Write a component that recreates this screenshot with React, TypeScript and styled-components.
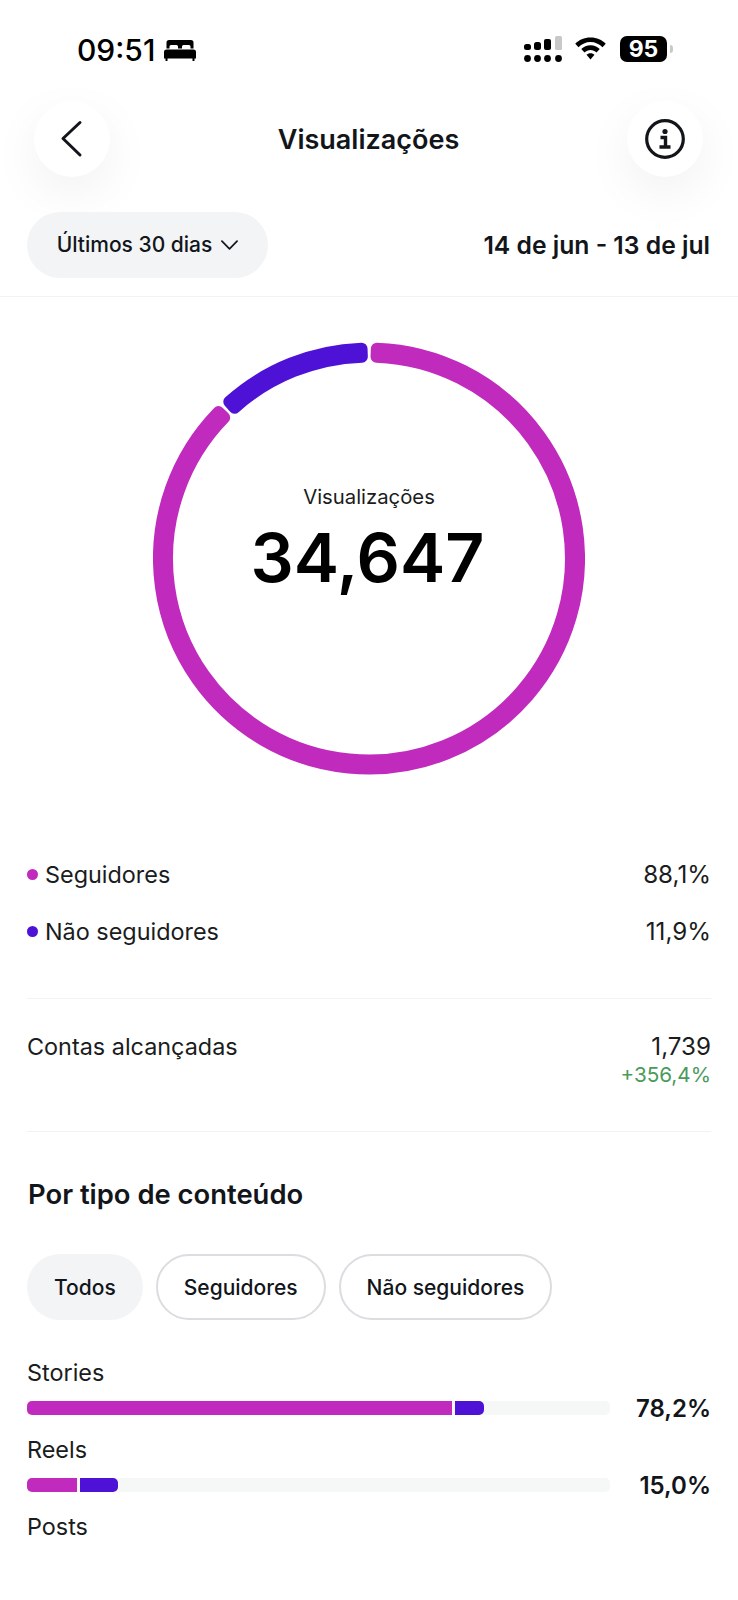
import React from "react";
import styled, { createGlobalStyle } from "styled-components";

const MAGENTA = "#c02abd";
const VIOLET = "#4e12d6";

const Global = createGlobalStyle`
  html, body { margin: 0; padding: 0; background: #fff; }
  * { box-sizing: border-box; }
  body { font-family: Inter, "Noto Sans", sans-serif; color: #12151a; }
`;

const Page = styled.div`
  width: 738px;
  height: 1600px;
  overflow: hidden;
  background: #fff;
  display: flex;
  flex-direction: column;
`;

const StatusBar = styled.div`
  height: 101px;
  padding: 29px 71px 0 77px;
  display: flex;
  justify-content: space-between;
  align-items: flex-start;
`;

const TimeGroup = styled.div`
  display: flex;
  align-items: center;
  gap: 9px;
  height: 40px;
  margin-top: 1px;
`;

const Time = styled.span`
  font-size: 30px;
  font-weight: 500;
  color: #000;
  line-height: 40px;
`;

const StatusIcons = styled.div`
  display: flex;
  align-items: center;
  gap: 12px;
  height: 40px;
`;

const Battery = styled.div`
  width: 47px;
  height: 26px;
  margin-left: 1px;
  background: #000;
  border-radius: 7px;
  color: #fff;
  font-size: 23px;
  font-weight: 700;
  display: flex;
  align-items: center;
  justify-content: center;
  position: relative;
  &::after {
    content: "";
    position: absolute;
    right: -6px;
    top: 9px;
    width: 3px;
    height: 8px;
    border-radius: 0 3px 3px 0;
    background: #c9c9c9;
  }
`;

const NavBar = styled.div`
  height: 76px;
  padding: 0 35px 0 34px;
  display: flex;
  align-items: center;
  justify-content: space-between;
`;

const RoundButton = styled.div`
  width: 76px;
  height: 76px;
  border-radius: 50%;
  background: #fff;
  display: flex;
  align-items: center;
  justify-content: center;
  box-shadow: 0 16px 50px rgba(0, 0, 0, 0.06);
`;

const Title = styled.div`
  font-size: 27px;
  font-weight: 600;
`;

const FilterBar = styled.div`
  margin-top: 35px;
  height: 85px;
  padding: 0 28px 19px 27px;
  display: flex;
  align-items: center;
  justify-content: space-between;
  border-bottom: 1px solid #f2f3f4;
`;

const RangePill = styled.div`
  width: 241px;
  height: 66px;
  border-radius: 33px;
  background: #f3f4f6;
  display: flex;
  align-items: center;
  justify-content: center;
  gap: 9px;
  font-size: 21px;
  font-weight: 500;
`;

const DateRange = styled.div`
  font-size: 24.7px;
  font-weight: 600;
`;

const RingWrap = styled.div`
  margin-top: 45px;
  height: 434px;
  position: relative;
  display: flex;
  justify-content: center;
`;

const RingCenter = styled.div`
  position: absolute;
  left: 0;
  right: 0;
  top: 139px;
  display: flex;
  flex-direction: column;
  align-items: center;
`;

const RingLabel = styled.div`
  font-size: 20.3px;
  line-height: 32px;
  color: #1a1c20;
`;

const RingValue = styled.div`
  margin: 4px 3px 0 0;
  font-size: 68px;
  font-weight: 600;
  line-height: 80px;
  color: #000;
`;

const Legend = styled.div`
  margin-top: 82px;
  padding: 0 27px;
  display: flex;
  flex-direction: column;
  gap: 25px;
`;

const Row = styled.div`
  height: 32px;
  display: flex;
  align-items: center;
  justify-content: space-between;
  font-size: 23.4px;
  color: #1a1c20;
`;

const LegendName = styled.div`
  display: flex;
  align-items: center;
  gap: 7px;
`;

const Dot = styled.span<{ $color: string }>`
  width: 11px;
  height: 11px;
  border-radius: 50%;
  background: ${(p) => p.$color};
`;

const Amount = styled.span`
  font-size: 24.2px;
`;

const Divider = styled.div<{ $top?: number }>`
  margin: ${(p) => p.$top ?? 0}px 27px 0;
  height: 1px;
  background: #f1f2f3;
`;

const ReachRow = styled.div`
  margin: 32px 27px 45px;
  display: flex;
  justify-content: space-between;
  align-items: flex-start;
  font-size: 23.4px;
  color: #1a1c20;
  line-height: 32px;
`;

const ReachValues = styled.div`
  display: flex;
  flex-direction: column;
  align-items: flex-end;
`;

const Growth = styled.div`
  font-size: 20.7px;
  line-height: 23px;
  color: #4a9a5c;
`;

const SectionTitle = styled.div`
  margin: 44px 0 0 28px;
  font-size: 27.4px;
  font-weight: 600;
  line-height: 36px;
`;

const Chips = styled.div`
  margin: 42px 0 0 27px;
  display: flex;
  gap: 13px;
`;

const Chip = styled.div<{ $active?: boolean }>`
  height: 66px;
  padding: 0 ${(p) => (p.$active ? 27 : 26)}px;
  border-radius: 33px;
  display: flex;
  align-items: center;
  font-size: 21px;
  font-weight: 500;
  background: ${(p) => (p.$active ? "#f3f4f6" : "#fff")};
  border: ${(p) => (p.$active ? "none" : "2px solid #dcdde0")};
`;

const TypeList = styled.div`
  margin: 37px 27px 0;
  display: flex;
  flex-direction: column;
`;

const TypeName = styled.div`
  font-size: 23.4px;
  line-height: 32px;
  color: #1a1c20;
`;

const TypeBarRow = styled.div`
  height: 32px;
  margin-top: 3px;
  margin-bottom: 10px;
  display: flex;
  align-items: center;
  justify-content: space-between;
`;

const Track = styled.div`
  width: 583px;
  height: 14px;
  border-radius: 5px;
  background: #f6f8f8;
  display: flex;
  overflow: hidden;
`;

const Segment = styled.div<{ $color: string; $gap?: boolean }>`
  height: 100%;
  background: ${(p) => p.$color};
  border-radius: ${(p) => (p.$gap ? "0 5px 5px 0" : "0")};
  margin-left: ${(p) => (p.$gap ? 3 : 0)}px;
`;

const Percent = styled.div`
  font-size: 24px;
  font-weight: 600;
`;

const rad = (d: number) => ((d - 90) * Math.PI) / 180;
const pt = (r: number, d: number) =>
  `${(216 + r * Math.cos(rad(d))).toFixed(2)} ${(216.5 + r * Math.sin(rad(d))).toFixed(2)}`;

function sector(from: number, to: number) {
  const large = to - from > 180 ? 1 : 0;
  const ro = 210;
  const ri = 202;
  return `M${pt(ro, from)} A${ro} ${ro} 0 ${large} 1 ${pt(ro, to)} L${pt(ri, to)} A${ri} ${ri} 0 ${large} 0 ${pt(ri, from)} Z`;
}

const Ring = () => (
  <svg width="432" height="434" viewBox="0 0 432 434">
    <path d={sector(2.14, 314.2)} fill={MAGENTA} stroke={MAGENTA} strokeWidth="12" strokeLinejoin="round" />
    <path d={sector(318.3, 357.97)} fill={VIOLET} stroke={VIOLET} strokeWidth="12" strokeLinejoin="round" />
  </svg>
);

const types = [
  { name: "Stories", a: 425, b: 29, pct: "78,2%" },
  { name: "Reels", a: 50, b: 38, pct: "15,0%" },
];

export default function App() {
  return (
    <Page>
      <Global />
      <StatusBar>
        <TimeGroup>
          <Time>09:51</Time>
          <svg width="32" height="23" viewBox="0 0 32 22">
            <path d="M5 0.500h22a2.500 2.500 0 0 1 2.500 2.500V9h-3V7a1.500 1.500 0 0 0-1.500-1.500h-5.500A1.500 1.500 0 0 0 18 7V9h-4V7A1.500 1.500 0 0 0 12.500 5.500H7A1.500 1.500 0 0 0 5.500 7V9h-3V3A2.500 2.500 0 0 1 5 0.500Z" fill="#000" />
            <path d="M2.500 10h27A2.500 2.500 0 0 1 32 12.500V19h-1.500v2.500h-2V19h-25v2.500h-2V19H0v-6.500A2.500 2.500 0 0 1 2.500 10Z" fill="#000" />
          </svg>
        </TimeGroup>
        <StatusIcons>
          <svg width="38" height="26" viewBox="0 0 38 26">
            <rect x="0" y="8" width="7" height="6" rx="2.500" fill="#000" />
            <rect x="10" y="6" width="7" height="8" rx="2.500" fill="#000" />
            <rect x="20" y="3" width="7" height="11" rx="2" fill="#000" />
            <rect x="31" y="0" width="7" height="14" rx="1.500" fill="#c8c8c8" />
            <circle cx="3.500" cy="22.500" r="3.400" fill="#000" />
            <circle cx="13.500" cy="22.500" r="3.400" fill="#000" />
            <circle cx="23.500" cy="22.500" r="3.400" fill="#000" />
            <circle cx="34.500" cy="22.500" r="3.400" fill="#000" />
          </svg>
          <svg width="33" height="24" viewBox="0 0 34 26">
            <path d="M17 0.500C24 0.500 29.500 3.200 33.500 7.200L30 11C26.500 7.700 22 5.500 17 5.500S7.500 7.700 4 11L0.500 7.200C4.500 3.200 10 0.500 17 0.500Z" fill="#000" />
            <path d="M17 9C21 9 24.300 10.500 27 13L23.500 16.800C21.700 15.200 19.500 14.200 17 14.200S12.300 15.200 10.500 16.800L7 13C9.700 10.500 13 9 17 9Z" fill="#000" />
            <path d="M17 17.500C18.800 17.500 20.300 18.200 21.300 19.200L17 24.500L12.700 19.200C13.700 18.200 15.200 17.500 17 17.500Z" fill="#000" />
          </svg>
          <Battery>95</Battery>
        </StatusIcons>
      </StatusBar>

      <NavBar>
        <RoundButton>
          <svg width="24" height="38" viewBox="0 0 24 38" fill="none" stroke="#12151a" strokeWidth="3" strokeLinecap="round" strokeLinejoin="round">
            <path d="M20 2.500L3 18.500L20 35" />
          </svg>
        </RoundButton>
        <Title>Visualizações</Title>
        <RoundButton>
          <svg width="40" height="40" viewBox="0 0 40 40" fill="none" stroke="#12151a">
            <circle cx="20" cy="20" r="18.300" strokeWidth="3.200" />
            <circle cx="20" cy="12.500" r="2.600" fill="#12151a" stroke="none" />
            <path d="M15.500 18.500h5v9M14.500 28h11" strokeWidth="3.400" />
          </svg>
        </RoundButton>
      </NavBar>

      <FilterBar>
        <RangePill>
          Últimos 30 dias
          <svg width="17" height="10" viewBox="0 0 18 10" fill="none" stroke="#12151a" strokeWidth="1.800" strokeLinecap="round" strokeLinejoin="round">
            <path d="M1 1l8 8 8-8" />
          </svg>
        </RangePill>
        <DateRange>14 de jun - 13 de jul</DateRange>
      </FilterBar>

      <RingWrap>
        <Ring />
        <RingCenter>
          <RingLabel>Visualizações</RingLabel>
          <RingValue>34,647</RingValue>
        </RingCenter>
      </RingWrap>

      <Legend>
        <Row>
          <LegendName><Dot $color={MAGENTA} />Seguidores</LegendName>
          <Amount>88,1%</Amount>
        </Row>
        <Row>
          <LegendName><Dot $color={VIOLET} />Não seguidores</LegendName>
          <Amount>11,9%</Amount>
        </Row>
      </Legend>

      <Divider $top={51} />
      <ReachRow>
        <span>Contas alcançadas</span>
        <ReachValues>
          <Amount>1,739</Amount>
          <Growth>+356,4%</Growth>
        </ReachValues>
      </ReachRow>
      <Divider />

      <SectionTitle>Por tipo de conteúdo</SectionTitle>
      <Chips>
        <Chip $active>Todos</Chip>
        <Chip>Seguidores</Chip>
        <Chip>Não seguidores</Chip>
      </Chips>

      <TypeList>
        {types.map((t) => (
          <React.Fragment key={t.name}>
            <TypeName>{t.name}</TypeName>
            <TypeBarRow>
              <Track>
                <Segment $color={MAGENTA} style={{ width: t.a }} />
                <Segment $color={VIOLET} $gap style={{ width: t.b }} />
              </Track>
              <Percent>{t.pct}</Percent>
            </TypeBarRow>
          </React.Fragment>
        ))}
        <TypeName>Posts</TypeName>
      </TypeList>
    </Page>
  );
}
